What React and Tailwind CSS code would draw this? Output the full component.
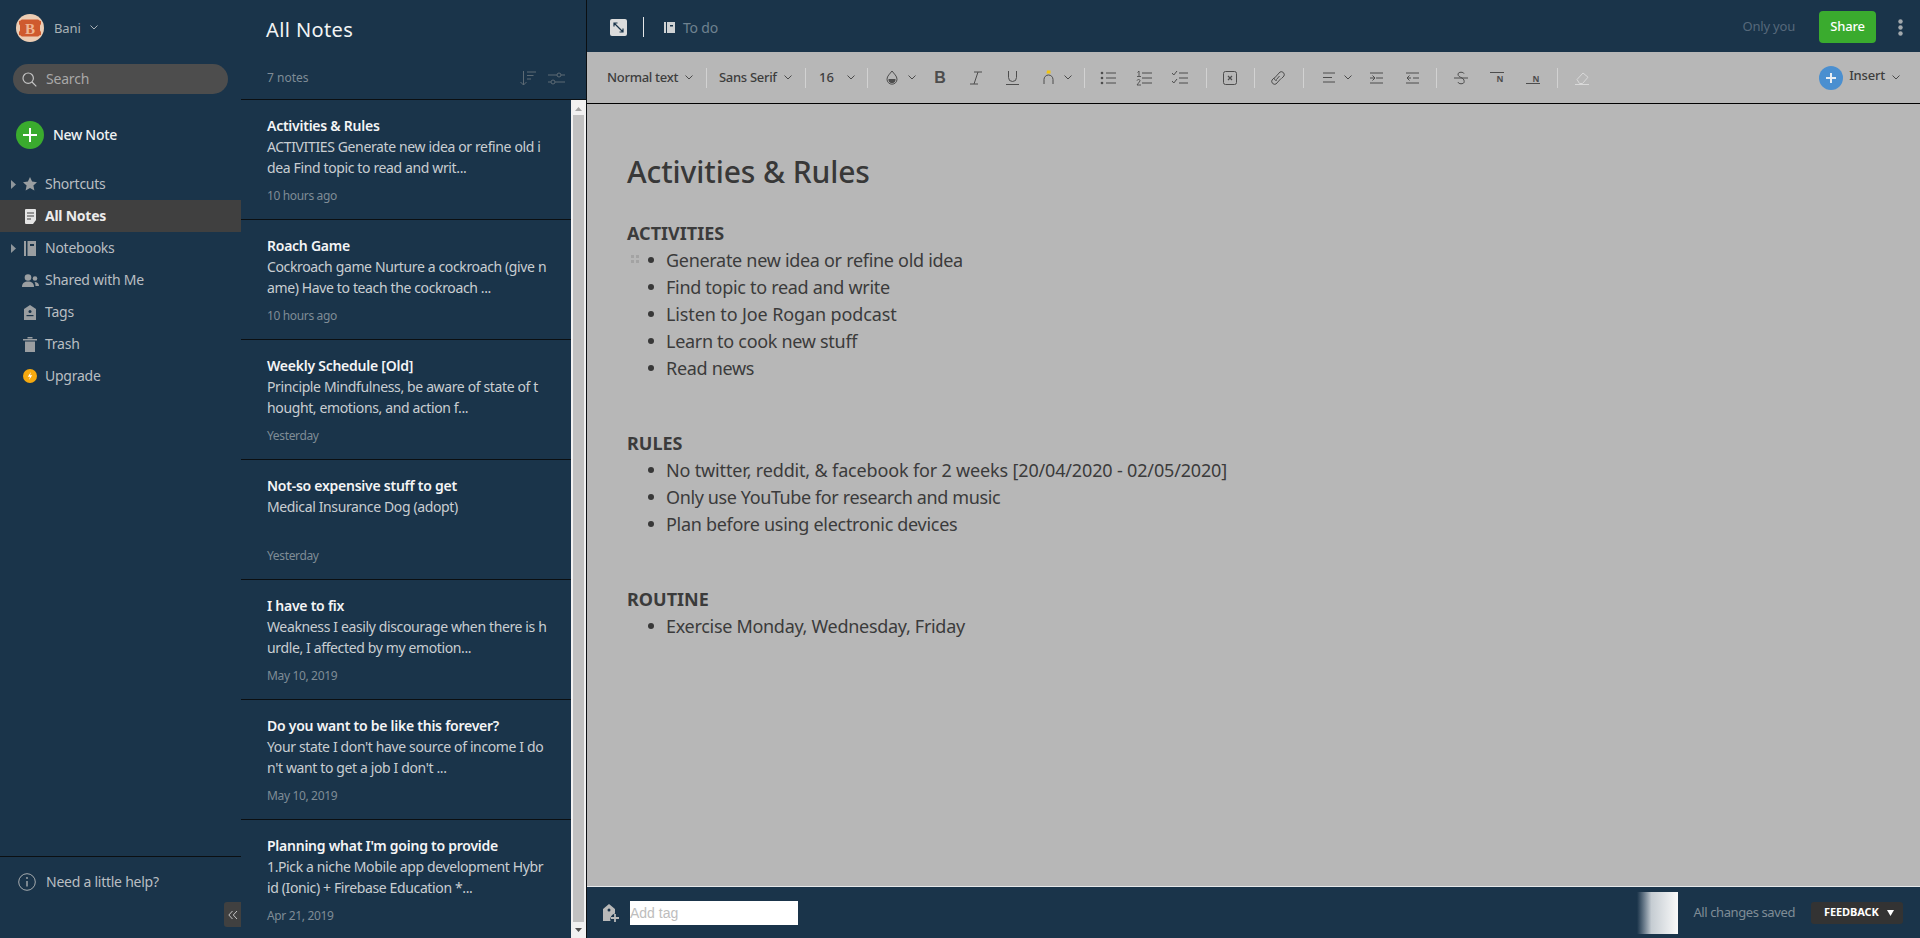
import React from 'react';

function Chev({ className = 'text-[#4a4a4a]' }) {
  return (
    <svg width="8" height="5" viewBox="0 0 8 5" className={`block ${className}`} fill="none" stroke="currentColor" strokeWidth="1">
      <path d="M.5.5 4 4 7.5.5" />
    </svg>
  );
}

function Sep({ className = '' }) {
  return <div className={`w-px h-[20px] bg-[#d2d2d2] shrink-0 ${className}`} />;
}

function Tool({ children }) {
  return <div className="w-9 h-5 flex items-center justify-center shrink-0">{children}</div>;
}

const I = ({ children, w = 16, h = 16, vb = '0 0 16 16', c = '#4d4d4d' }) => (
  <svg width={w} height={h} viewBox={vb} fill="none" stroke={c} strokeWidth="1" className="block shrink-0">
    {children}
  </svg>
);

const notes = [
  ['Activities & Rules', 'ACTIVITIES Generate new idea or refine old i', 'dea Find topic to read and writ...', '10 hours ago'],
  ['Roach Game', 'Cockroach game Nurture a cockroach (give n', 'ame) Have to teach the cockroach ...', '10 hours ago'],
  ['Weekly Schedule [Old]', 'Principle Mindfulness, be aware of state of t', 'hought, emotions, and action f...', 'Yesterday'],
  ['Not-so expensive stuff to get', 'Medical Insurance Dog (adopt)', '', 'Yesterday'],
  ['I have to fix', 'Weakness I easily discourage when there is h', 'urdle, I affected by my emotion...', 'May 10, 2019'],
  ['Do you want to be like this forever?', "Your state I don't have source of income I do", "n't want to get a job I don't ...", 'May 10, 2019'],
  ["Planning what I'm going to provide", '1.Pick a niche Mobile app development Hybr', 'id (Ionic) + Firebase Education *...', 'Apr 21, 2019'],
];

function Note({ n }) {
  return (
    <div className="h-[120px] shrink-0 border-b border-[#0b0f12] pl-[26px] pr-[20px] pt-[16px]">
      <div className="text-[14px] font-semibold tracking-[-0.25px] leading-[20px] text-[#f4f5f6] whitespace-nowrap">{n[0]}</div>
      <div className="text-[14px] tracking-[-0.37px] leading-[21px] text-[#c9ced2] whitespace-nowrap">{n[1]}</div>
      <div className="text-[14px] tracking-[-0.37px] leading-[21px] h-[21px] text-[#c9ced2] whitespace-nowrap">{n[2]}</div>
      <div className="text-[12px] tracking-[-0.35px] leading-[16px] mt-[10px] text-[#7f8c96]">{n[3]}</div>
    </div>
  );
}

function NavRow({ icon, label, caret, active }) {
  return (
    <div className={`relative h-8 flex items-center text-[14px] tracking-[-0.25px] ${active ? 'bg-[#404040] text-[#ececec] font-bold' : 'text-[#b9bec2]'}`}>
      {caret && (
        <svg width="5" height="9" viewBox="0 0 5 9" className="absolute left-[11px] top-[12px]" fill="#8f969b"><path d="M0 0l5 4.5L0 9z" /></svg>
      )}
      <div className="ml-[21px] w-[18px] mr-[6px] flex justify-center shrink-0">{icon}</div>
      <span className="pb-[2px]">{label}</span>
    </div>
  );
}

const G = '#9a9ea1';

function Li({ children, handle, t = 'tracking-[-0.3px]' }) {
  return (
    <li className={`relative h-[27px] leading-[27px] pl-[39px] whitespace-nowrap ${t}`}>
      {handle && (
        <svg width="9" height="8" viewBox="0 0 9 8" className="absolute left-[4px] top-[8px]" fill="#a3a3a3">
          <rect x="0" y="0" width="3" height="3" /><rect x="5" y="0" width="3" height="3" />
          <rect x="0" y="5" width="3" height="3" /><rect x="5" y="5" width="3" height="3" />
        </svg>
      )}
      <span className="absolute left-[21px] top-[10px] w-[6px] h-[6px] rounded-full bg-[#383838]" />
      {children}
    </li>
  );
}

export default function App() {
  return (
    <div className="flex w-[1920px] h-[938px] overflow-hidden bg-[#1a344a]" style={{ fontFamily: '"Noto Sans", sans-serif' }}>
      {/* Sidebar */}
      <aside className="relative w-[241px] shrink-0 flex flex-col">
        <div className="h-[64px] pt-[14px] pl-[16px] flex items-start shrink-0">
          <svg width="28" height="28" viewBox="0 0 28 28" className="block shrink-0">
            <circle cx="14" cy="14" r="14" fill="#eccdb4" />
            <path d="M3 7c2 0 2-1.500 3-1.500h16c1 0 1 1.500 3 1.500v3l-1 1.500v5L25 18v3c-2 0-2 1.500-3 1.500H6c-1 0-1-1.500-3-1.500v-3l1-1.500v-5L3 10z" fill="#cf5a2e" />
            <text x="14" y="19.500" textAnchor="middle" fontSize="15" fontWeight="700" fill="#eeb592" fontFamily="Liberation Serif">B</text>
          </svg>
          <span className="ml-[10px] mt-[4px] text-[13px] leading-[20px] tracking-[-0.1px] text-[#aab1b6]">Bani</span>
          <span className="ml-[9px] mt-[11px]"><Chev className="text-[#aab1b6]" /></span>
        </div>
        <div className="mx-[13px] w-[215px] h-[30px] rounded-full bg-[#4d4d4d] flex items-center pl-[9px] shrink-0">
          <svg width="15" height="15" viewBox="0 0 15 15" fill="none" stroke="#c4c4c4" strokeWidth="1.2"><circle cx="6.2" cy="6.2" r="5.2" /><path d="M10 10l4.3 4.3" /></svg>
          <span className="ml-[9px] pb-[2px] text-[14px] tracking-[-0.2px] text-[#a8a8a8]">Search</span>
        </div>
        <div className="mt-[27px] pl-[16px] flex items-center h-[28px] shrink-0">
          <div className="w-[28px] h-[28px] rounded-full bg-[#3aab2e] flex items-center justify-center">
            <svg width="14" height="14" viewBox="0 0 14 14" stroke="#fff" strokeWidth="2"><path d="M7 0v14M0 7h14" /></svg>
          </div>
          <span className="ml-[9px] pb-[2px] text-[14px] tracking-[-0.3px] font-medium text-[#f0f2f3]">New Note</span>
        </div>
        <nav className="mt-[19px] shrink-0">
          <NavRow caret label="Shortcuts" icon={<svg width="14" height="14" viewBox="0 0 14 14" fill={G}><path d="M7 0l2.1 4.6 4.9.6-3.6 3.4 1 4.9L7 11.100 2.600 13.500l1-4.900L0 5.200l4.900-.6z" /></svg>} />
          <NavRow active label="All Notes" icon={<svg width="13" height="15" viewBox="0 0 13 15"><path d="M2 0h9a1 1 0 011 1v10l-3 4H2a1 1 0 01-1-1V1a1 1 0 011-1z" fill="#e4e4e4" /><path d="M3 4h7M3 7h7M3 10h4" stroke="#404040" strokeWidth="1" /></svg>} />
          <NavRow caret label="Notebooks" icon={<svg width="12" height="15" viewBox="0 0 12 15" fill={G}><rect x="0" y="0" width="2" height="15" /><path d="M3.500 0H12v15H3.500z" /><rect x="6" y="3" width="4" height="2" fill="#1a344a" /></svg>} />
          <NavRow label="Shared with Me" icon={<svg width="17" height="13" viewBox="0 0 17 13" fill={G}><circle cx="6" cy="3.500" r="3.300" /><path d="M0 13c0-4 2.500-5.500 6-5.500s6 1.500 6 5.500z" /><circle cx="13" cy="4.500" r="2.300" /><path d="M12.500 8c2.500 0 4.500 1 4.500 4h-3.500c0-2-.3-3-1-4z" /></svg>} />
          <NavRow label="Tags" icon={<svg width="12" height="15" viewBox="0 0 12 15" fill={G}><path d="M6 0l6 4v11H0V4z" /><circle cx="6" cy="6.500" r="1.500" fill="#1a344a" /><rect x="2.500" y="10" width="7" height="1.200" fill="#1a344a" /></svg>} />
          <NavRow label="Trash" icon={<svg width="14" height="15" viewBox="0 0 14 15" fill={G}><rect x="4.500" y="0" width="5" height="1.500" /><rect x="0" y="2" width="14" height="1.500" /><path d="M2 4.500h10V15H2z" /></svg>} />
          <NavRow label="Upgrade" icon={<svg width="14" height="14" viewBox="0 0 14 14"><circle cx="7" cy="7" r="7" fill="#f5a90f" /><path d="M8 3L4.800 7.800H7L6 11l3.200-4.800H7z" fill="#fff" /></svg>} />
        </nav>
        <div className="mt-auto h-[82px] border-t border-[#0b0f12] pl-[18px] pt-[15px] flex items-start shrink-0">
          <svg width="18" height="18" viewBox="0 0 18 18" fill="none" stroke="#a6abae" strokeWidth="1" className="mt-[1px]"><circle cx="9" cy="9" r="8.300" /><path d="M9 8v5.500" strokeWidth="1.400" /><circle cx="9" cy="5" r=".9" fill="#a6abae" stroke="none" /></svg>
          <span className="ml-[10px] text-[14px] leading-[20px] tracking-[-0.25px] text-[#b9bec2]">Need a little help?</span>
        </div>
        <div className="absolute right-0 top-[902px] w-[17px] h-[25px] bg-[#404040] rounded-l-[3px] flex items-center justify-center">
          <svg width="10" height="10" viewBox="0 0 10 10" fill="none" stroke="#c4c4c4" strokeWidth="1"><path d="M4.500 1L.8 5l3.700 4M9 1L5.300 5 9 9" /></svg>
        </div>
      </aside>

      {/* Notes list */}
      <section className="w-[346px] shrink-0 flex flex-col border-r border-[#0b0f12]">
        <div className="h-[100px] shrink-0 border-b border-[#0b0f12] flex flex-col pl-[26px] pr-[20px]">
          <div className="-ml-[1px] mt-[15px] text-[20px] leading-[30px] tracking-[0.4px] text-[#f2f4f5]">All Notes</div>
          <div className="mt-[24px] flex items-center justify-between pr-[1px]">
            <span className="text-[12px] leading-[18px] text-[#7f8c96]">7 notes</span>
            <div className="flex items-center gap-[12px]">
              <svg width="16" height="15" viewBox="0 0 16 15" fill="none" stroke="#5d6a74" strokeWidth="1"><path d="M3.500 0v14M.5 11l3 3 3-3M7 1h9M7 4.500h6.500M7 8h4" /></svg>
              <svg width="17" height="13" viewBox="0 0 17 13" fill="none" stroke="#5d6a74" strokeWidth="1"><path d="M0 3h9M13 3h4M0 10h3M7 10h10" /><circle cx="11" cy="3" r="2" /><circle cx="5" cy="10" r="2" /></svg>
            </div>
          </div>
        </div>
        <div className="flex-1 flex min-h-0">
          <div className="flex-1 min-w-0 overflow-hidden flex flex-col">
            {notes.map((n) => <Note key={n[0]} n={n} />)}
          </div>
          <div className="w-[15px] shrink-0 bg-[#f1f1f1] flex flex-col items-center">
            <svg width="7" height="4" viewBox="0 0 7 4" className="mt-[7px] shrink-0" fill="#a3a3a3"><path d="M3.500 0L7 4H0z" /></svg>
            <div className="mt-[4px] w-[11px] flex-1 bg-[#c1c1c1]" />
            <svg width="7" height="4" viewBox="0 0 7 4" className="my-[6px] shrink-0" fill="#505050"><path d="M0 0h7L3.500 4z" /></svg>
          </div>
        </div>
      </section>

      {/* Editor */}
      <main className="flex-1 min-w-0 flex flex-col">
        <header className="h-[52px] shrink-0 flex items-center pt-[2px] pl-[23px] pr-[17px]">
          <div className="w-[17px] h-[17px] rounded-[2px] bg-[#dcdcdc] flex items-center justify-center">
            <svg width="11" height="11" viewBox="0 0 11 11" fill="none" stroke="#1a344a" strokeWidth="1.200"><path d="M1 1l9 9M1 4.500V1h3.500M10 6.500V10H6.500" /></svg>
          </div>
          <div className="ml-[16px] w-px h-[20px] bg-[#e4e6e8]" />
          <svg width="11" height="11" viewBox="0 0 11 11" className="ml-[20px]" fill="#cfd2d4"><rect width="2" height="11" /><path d="M3 0h8v11H3z" /><rect x="6" y="3" width="3" height="1.500" fill="#1a344a" /></svg>
          <span className="ml-[8px] text-[14px] tracking-[-0.2px] text-[#6f8290]">To do</span>
          <span className="ml-auto text-[13px] tracking-[-0.2px] text-[#56687a]">Only you</span>
          <div className="ml-[24px] w-[57px] h-[32px] rounded-[4px] bg-[#3aab2e] text-white text-[13px] tracking-[-0.2px] font-medium flex items-center justify-center">Share</div>
          <svg width="5" height="17" viewBox="0 0 5 17" className="ml-[22px]" fill="#a3a9ad"><circle cx="2.500" cy="2.500" r="2.200" /><circle cx="2.500" cy="8.500" r="2.200" /><circle cx="2.500" cy="14.500" r="2.200" /></svg>
        </header>

        <div className="h-[52px] shrink-0 bg-[#b7b7b7] border-b border-black flex items-center pl-[20px] pr-[20px] text-[#3d3d3d]">
          <span className="text-[13px] font-medium tracking-[-0.3px] w-[74px] whitespace-nowrap">Normal text</span>
          <span className="ml-[4px]"><Chev /></span>
          <Sep className="ml-[13px]" />
          <span className="ml-[12px] text-[13px] font-medium tracking-[-0.3px] w-[60px] whitespace-nowrap">Sans Serif</span>
          <span className="ml-[5px]"><Chev /></span>
          <Sep className="ml-[13px]" />
          <span className="ml-[13px] text-[13px] font-medium w-[16px]">16</span>
          <span className="ml-[12px]"><Chev /></span>
          <Sep className="ml-[12px] mr-[18px]" />
          <I w={12} h={15} vb="0 0 12 15"><path d="M6 1c2 2.800 5 5 5 8.200A5 5 0 011 9.200C1 6 4 3.800 6 1z" /><path d="M2.800 9.500h6.400a3.200 3.200 0 01-6.400 0z" fill="#4d4d4d" /></I>
          <span className="ml-[10px] mr-[6px]"><Chev /></span>
          <Tool><span className="text-[16px] font-bold text-[#4d4d4d] leading-none" style={{ fontFamily: '"Liberation Sans"' }}>B</span></Tool>
          <Tool><I w={12} h={14} vb="0 0 12 14"><path d="M4 1h8M0 13h8M8 1 4 13" /></I></Tool>
          <Tool><I w={13} h={14} vb="0 0 13 14"><path d="M2.500 0v6.500a4 4 0 008 0V0M0 13.500h13" /></I></Tool>
          <Tool>
            <svg width="11" height="15" viewBox="0 0 11 15" fill="none" className="block"><path d="M1 14V9.500a4.500 4.500 0 019 0V14" stroke="#4d4d4d" /><path d="M3.500 3.500L4 0.500h3.500v3z" fill="#f2c40f" /></svg>
          </Tool>
          <span className="-ml-[2px]"><Chev /></span>
          <Sep className="ml-[12px] mr-[5px]" />
          <Tool><I><circle cx="2" cy="3" r="1.300" fill="#4d4d4d" stroke="none" /><circle cx="2" cy="8" r="1.300" fill="#4d4d4d" stroke="none" /><circle cx="2" cy="13" r="1.300" fill="#4d4d4d" stroke="none" /><path d="M6 3h10M6 8h10M6 13h10" /></I></Tool>
          <Tool><I><path d="M6 3h10M6 8h10M6 13h10" /><path d="M1.500 2.500L3 1v5M1 6.500h4" strokeWidth=".9" /><path d="M1 10.500c.5-1.500 3.500-1.200 3 .5L1 15h4" strokeWidth=".9" /></I></Tool>
          <Tool><I><path d="M0 3l1.800 2L5 1M0 11l1.800 2L5 9M7 3h9M7 8h9M7 13h9" /></I></Tool>
          <Sep className="ml-[8px] mr-[5px]" />
          <Tool><svg width="14" height="14" viewBox="0 0 14 14" fill="none" stroke="#4d4d4d" className="block"><rect x=".5" y=".5" width="13" height="13" rx="2" /><path d="M5 5l4 4M9 5L5 9" strokeWidth="1.200" /></svg></Tool>
          <Sep className="ml-[6px] mr-[5px]" />
          <Tool><I><path d="M6.500 9.500l3-3.500M4.500 7.500L2 10a3 3 0 004 4l5-5.500" /><path d="M11.500 8.500L14 6a3 3 0 00-4-4L5 7.500A1.600 1.600 0 007 10" /></I></Tool>
          <Sep className="ml-[7px] mr-[19px]" />
          <I w={12} h={11} vb="0 0 12 11"><path d="M0 1h12M0 5.500h9M0 10h12" /></I>
          <span className="ml-[9px] mr-[6px]"><Chev /></span>
          <Tool><I w={13} h={12} vb="0 0 13 12"><path d="M0 1h13M6 6h7M0 11h13M0 6h4M2.500 3.500L5 6 2.500 8.500" /></I></Tool>
          <Tool><I w={13} h={12} vb="0 0 13 12"><path d="M0 1h13M7 6h6M0 11h13M1 6h4M3.500 3.500L1 6l2.500 2.500" /></I></Tool>
          <Sep className="ml-[6px] mr-[6px]" />
          <Tool><I w={14} h={14} vb="0 0 14 14"><path d="M0 7h14M10 2.500C9.500 1 4.500 .5 4 3c-.3 2 2 3 4 4s2.500 3 2 4.500S4.500 13.500 4 11" /></I></Tool>
          <Tool><svg width="14" height="16" viewBox="0 0 14 16" className="block"><path d="M0 2.500h14" stroke="#4d4d4d" /><text x="10" y="11.500" fontSize="8.500" fontWeight="700" textAnchor="middle" fill="#4d4d4d">N</text></svg></Tool>
          <Tool><svg width="14" height="16" viewBox="0 0 14 16" className="block"><path d="M0 13.500h14" stroke="#4d4d4d" /><text x="10" y="11.500" fontSize="8.500" fontWeight="700" textAnchor="middle" fill="#4d4d4d">N</text></svg></Tool>
          <Sep className="ml-[6px] mr-[6px]" />
          <Tool><I w={14} h={14} vb="0 0 14 14" c="#d9d9d9"><path d="M0 13.500h14M2 8.500L8 2l5 4.200-5.500 6.300h-3z" /></I></Tool>
          <div className="ml-auto flex items-center">
            <div className="w-[24px] h-[24px] rounded-full bg-[#4a8fd0] flex items-center justify-center">
              <svg width="10" height="10" viewBox="0 0 10 10" stroke="#e8eef4" strokeWidth="2"><path d="M5 0v10M0 5h10" /></svg>
            </div>
            <span className="ml-[6px] pb-[3px] text-[13px] tracking-[-0.2px] font-medium">Insert</span>
            <span className="ml-[7px]"><Chev /></span>
          </div>
        </div>

        <article className="flex-1 min-h-0 bg-[#b7b7b7] pl-[40px] pt-[46px] text-[18px] text-[#3b3b3b]">
          <h1 className="text-[30px] leading-[44px] tracking-[-0.1px] font-medium text-[#383838]">Activities &amp; Rules</h1>
          <p className="mt-[26px] h-[27px] leading-[27px] font-bold">ACTIVITIES</p>
          <ul>
            <Li handle>Generate new idea or refine old idea</Li>
            <Li>Find topic to read and write</Li>
            <Li t="tracking-[-0.12px]">Listen to Joe Rogan podcast</Li>
            <Li>Learn to cook new stuff</Li>
            <Li>Read news</Li>
          </ul>
          <p className="mt-[48px] h-[27px] leading-[27px] font-bold">RULES</p>
          <ul>
            <Li t="tracking-[-0.16px]">No twitter, reddit, &amp; facebook for 2 weeks [20/04/2020 - 02/05/2020]</Li>
            <Li t="tracking-[-0.39px]">Only use YouTube for research and music</Li>
            <Li>Plan before using electronic devices</Li>
          </ul>
          <p className="mt-[48px] h-[27px] leading-[27px] font-bold">ROUTINE</p>
          <ul>
            <Li>Exercise Monday, Wednesday, Friday</Li>
          </ul>
        </article>

        <footer className="h-[52px] shrink-0 border-t border-[#e6e8ea] flex items-center pl-[15px] pr-[17px]">
          <svg width="18" height="20" viewBox="0 0 18 20" className="shrink-0">
            <path d="M7 1l6 5v4.500A6 6 0 008.500 18H1V6z" fill="#b9b9b9" /><circle cx="7" cy="7" r="1.500" fill="#1a344a" />
            <path d="M13 11v8M9 15h8" stroke="#b9b9b9" strokeWidth="1.800" />
          </svg>
          <input readOnly placeholder="Add tag" className="ml-[10px] w-[168px] h-[24px] bg-white text-[14px] placeholder:text-[#bdbdbd] outline-none" style={{ fontFamily: '"Liberation Sans"' }} />
          <div className="ml-auto w-[41px] h-[42px] bg-gradient-to-r from-[#1a344a] via-[#c5ccd2] via-35% to-[#fafafa]" />
          <span className="ml-[15px] text-[13px] tracking-[-0.4px] text-[#7f8c96]">All changes saved</span>
          <div className="ml-[16px] w-[92px] h-[22px] rounded-[3px] bg-[#333333] text-white text-[11px] font-bold flex items-center pl-[13px] gap-[8px]">
            <span className="tracking-[-0.1px]">FEEDBACK</span>
            <svg width="7" height="7" viewBox="0 0 7 7" fill="#fff"><path d="M0 1h7L3.500 7z" /></svg>
          </div>
        </footer>
      </main>
    </div>
  );
}
